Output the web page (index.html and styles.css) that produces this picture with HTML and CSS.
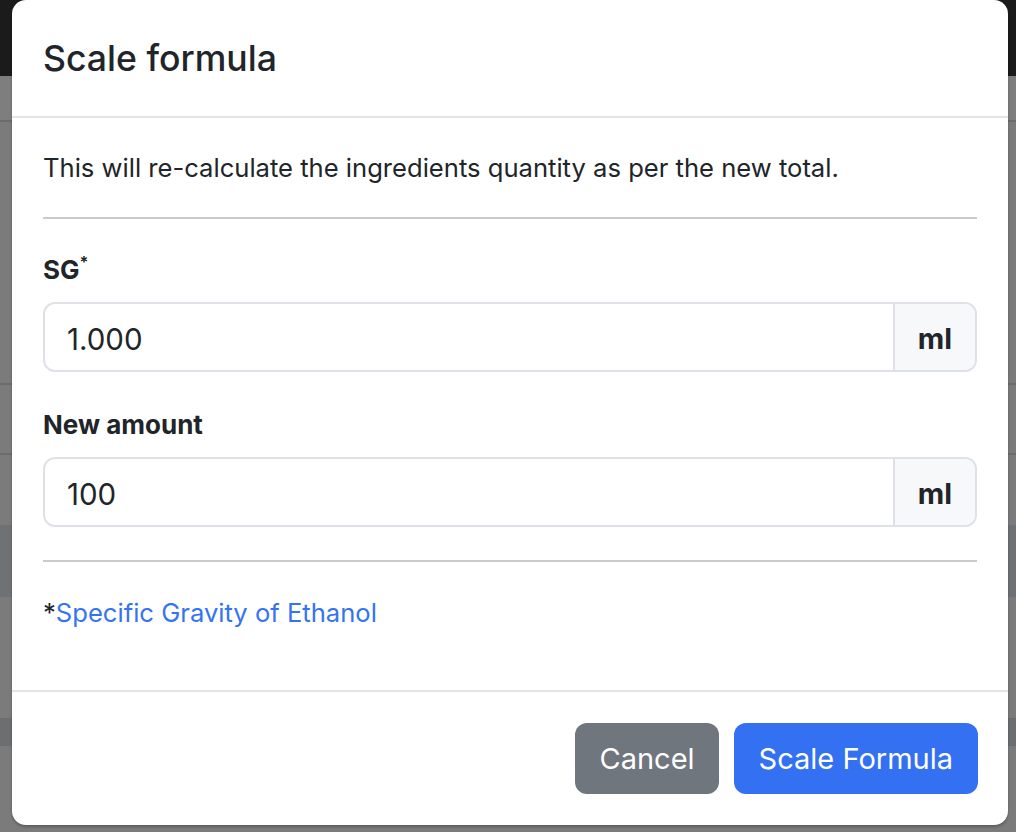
FILE: index.html
```
<!DOCTYPE html>
<html>
<head>
<meta charset="utf-8">
<link rel="stylesheet" href="styles.css">
</head>
<body>
<div class="page">
  <div class="topbar"></div>
  <div class="bg-row bg-row-a"></div>
  <div class="bg-row bg-row-b"></div>
  <div class="bg-row bg-row-c"></div>
  <div class="bg-row bg-row-d"></div>
  <div class="bg-row bg-band"></div>
  <div class="bg-row bg-row-e"></div>
  <div class="bg-row bg-band bg-band-2"></div>
</div>
<div class="modal">
  <div class="modal-header">
    <h4 class="modal-title">Scale formula</h4>
  </div>
  <div class="modal-body">
    <p class="intro">This will re-calculate the ingredients quantity as per the new total.</p>
    <hr class="sep">
    <label class="field-label">SG<sup>*</sup></label>
    <div class="input-group">
      <div class="form-control">1.000</div>
      <div class="addon">ml</div>
    </div>
    <label class="field-label field-label-2">New amount</label>
    <div class="input-group">
      <div class="form-control">100</div>
      <div class="addon">ml</div>
    </div>
    <hr class="sep sep-2">
    <p class="note">*<a class="link" href="#">Specific Gravity of Ethanol</a></p>
  </div>
  <div class="modal-footer">
    <button class="btn btn-secondary">Cancel</button>
    <button class="btn btn-primary">Scale Formula</button>
  </div>
</div>
</body>
</html>
```
FILE: styles.css
```
html, body {
  margin: 0;
  padding: 0;
}
body {
  width: 1016px;
  height: 832px;
  overflow: hidden;
  background: #7b7b7b;
  font-family: Inter, "Liberation Sans", sans-serif;
  color: #212529;
}
.page {
  display: flex;
  flex-direction: column;
}
.topbar {
  height: 76px;
  background: #1b1b1b;
}
.bg-row {
  border-bottom: 2px solid #6c6c6c;
}
.bg-row-a { height: 44px; background: #7e7e7e; }
.bg-row-b { height: 261px; }
.bg-row-c { height: 68px; }
.bg-row-d { height: 70px; border-bottom: none; }
.bg-band { height: 72px; background: #6f7275; border-bottom: none; }
.bg-row-e { height: 121px; border-bottom: none; }
.bg-band-2 { height: 28px; background: #6d6e70; }

.modal {
  position: absolute;
  left: 12px;
  top: 0;
  width: 996px;
  height: 825px;
  background: #fff;
  border-radius: 14px;
  box-shadow: 0 2px 3px rgba(0, 0, 0, 0.25);
  display: flex;
  flex-direction: column;
  overflow: hidden;
}
.modal-header {
  height: 116px;
  padding: 0 31px;
  display: flex;
  align-items: center;
  border-bottom: 2px solid #e2e4e7;
}
.modal-title {
  margin: 0;
  padding-top: 2px;
  font-size: 35.6px;
  font-weight: 500;
  line-height: 1.2;
}
.modal-body {
  flex: 1;
  padding: 31px 31px 0;
  display: flex;
  flex-direction: column;
}
.intro {
  margin: 0;
  font-size: 25.6px;
  line-height: 38px;
}
.sep {
  margin: 30px 0 32px;
  border: 0;
  border-top: 2px solid #c9cacc;
  height: 0;
}
.sep-2 {
  margin: 33px 0 30px;
}
.field-label {
  display: block;
  font-size: 26px;
  font-weight: 700;
  line-height: 38px;
  margin-bottom: 13px;
}
.field-label sup {
  font-size: 16px;
  line-height: 0;
  vertical-align: 11px;
}
.field-label-2 {
  margin-top: 34px;
}
.input-group {
  display: flex;
  height: 70px;
  box-sizing: border-box;
  border: 2px solid #dee2e6;
  border-radius: 12px;
  overflow: hidden;
}
.form-control {
  flex: 1;
  display: flex;
  align-items: center;
  padding: 4px 22px 0;
  font-size: 29.5px;
}
.addon {
  width: 80px;
  display: flex;
  align-items: center;
  justify-content: center;
  padding-top: 3px;
  background: #f7f8fa;
  border-left: 2px solid #dee2e6;
  font-size: 29px;
  font-weight: 700;
}
.note {
  margin: 0;
  padding-top: 2px;
  font-size: 25.6px;
  line-height: 38px;
}
.link {
  color: #3574f0;
  text-decoration: none;
}
.modal-footer {
  border-top: 2px solid #e2e4e7;
  padding: 31px 30px;
  display: flex;
  justify-content: flex-end;
  gap: 15px;
}
.btn {
  height: 71px;
  padding: 0 25px;
  border: 0;
  border-radius: 12px;
  color: #fff;
  font-family: inherit;
  font-size: 29px;
  font-weight: 400;
}
.btn-secondary {
  background: #70767d;
  padding: 0 24px;
}
.btn-primary {
  background: #3370f2;
}
```
